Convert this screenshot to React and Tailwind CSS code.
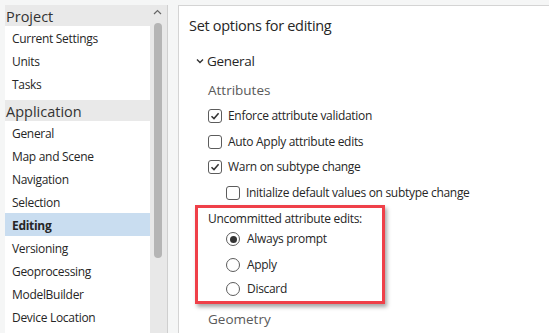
import React from 'react';

const font = { fontFamily: '"Open Sans", "Noto Sans", sans-serif' };

const groups = [
  { title: 'Project', items: ['Current Settings', 'Units', 'Tasks'] },
  {
    title: 'Application',
    items: ['General', 'Map and Scene', 'Navigation', 'Selection', 'Editing', 'Versioning', 'Geoprocessing', 'ModelBuilder', 'Device Location'],
  },
];

const Checkbox = ({ checked }) => (
  <span className="w-[14px] h-[14px] border border-[#5c5c5c] rounded-[3px] bg-white flex items-center justify-center shrink-0">
    {checked && (
      <svg width="10" height="10" viewBox="0 0 10 10">
        <path d="M1.5 5.2 L4 7.6 L8.6 2.2" fill="none" stroke="#333" strokeWidth="1.5" />
      </svg>
    )}
  </span>
);

const Radio = ({ checked }) => (
  <span className="w-[14px] h-[14px] border border-[#5c5c5c] rounded-full bg-white flex items-center justify-center shrink-0">
    {checked && <span className="w-[7px] h-[7px] rounded-full bg-[#333]" />}
  </span>
);

const CheckRow = ({ checked, label, h, indent }) => (
  <div className={`flex items-center gap-[6px] ${h} ${indent ? 'pl-[37px]' : 'pl-[19px]'}`}>
    <Checkbox checked={checked} />
    <span>{label}</span>
  </div>
);

const RadioRow = ({ checked, label, h }) => (
  <div className={`flex items-center gap-[7px] pl-[28px] ${h}`}>
    <Radio checked={checked} />
    <span>{label}</span>
  </div>
);

export default function App() {
  return (
    <div className="w-[549px] h-[333px] bg-[#f5f6f6] flex pt-[5px] pl-[5px] overflow-hidden text-[#262626]" style={font}>
      {/* sidebar */}
      <div className="w-[145px] bg-white flex flex-col">
        {groups.map((g, gi) => (
          <div key={g.title} className={gi === 0 ? 'pb-[5px]' : ''}>
            <div className="h-[21px] bg-[#e9e9e9] flex items-center pl-[1px] pt-[2px] text-[14.5px] text-[#333]">{g.title}</div>
            {g.items.map((it) => (
              <div
                key={it}
                className={`h-[23px] flex items-center pl-[7px] pt-[2px] text-[12px] tracking-[-0.3px] ${it === 'Editing' ? 'bg-[#c9ddf0] font-bold' : ''}`}
              >
                {it}
              </div>
            ))}
          </div>
        ))}
      </div>

      {/* scrollbar */}
      <div className="w-[18px] bg-[#e8e8e8] border-r border-[#cfcfcf] flex flex-col items-center pt-[4px]">
        <svg width="9" height="6" viewBox="0 0 9 6" className="ml-[-2px]">
          <path d="M1 5 L4.5 1.5 L8 5" fill="none" stroke="#666" strokeWidth="1.2" />
        </svg>
        <div className="w-[8px] h-[235px] mt-[8px] bg-[#b5b5b5] rounded-full ml-[-2px]" />
      </div>

      <div className="w-[10px]" />

      {/* main panel */}
      <div className="flex-1 bg-white border-l border-t border-[#d4d4d4] flex flex-col pl-[10px] pt-[1px] text-[12px] tracking-[-0.3px]">
        <div className="h-[40px] flex items-center text-[14.5px]">Set options for editing</div>
        <div className="h-[32px] flex items-center gap-[3px] pl-[7px] text-[13.5px]">
          <svg width="8" height="6" viewBox="0 0 8 6">
            <path d="M1 1.5 L4 4.5 L7 1.5" fill="none" stroke="#333" strokeWidth="1.4" />
          </svg>
          <span>General</span>
        </div>
        <div className="h-[29px] flex items-center pl-[19px] text-[13.5px] tracking-normal text-[#5a5a5a]">Attributes</div>
        <CheckRow checked label="Enforce attribute validation" h="h-[26px]" />
        <CheckRow label="Auto Apply attribute edits" h="h-[27px]" />
        <CheckRow checked label="Warn on subtype change" h="h-[27px]" />
        <CheckRow indent label="Initialize default values on subtype change" h="h-[26px]" />

        <div className="ml-[6px] w-[190px] border-[3px] border-[#ef4049] shadow-[2px_3px_4px_rgba(0,0,0,0.35)]">
          <div className="h-[18px] flex items-center pl-[10px] pt-[4px]">Uncommitted attribute edits:</div>
          <RadioRow checked label="Always prompt" h="h-[26px]" />
          <RadioRow label="Apply" h="h-[25px]" />
          <RadioRow label="Discard" h="h-[24px]" />
        </div>

        <div className="h-[30px] flex items-center pl-[19px] text-[13.5px] tracking-normal text-[#5a5a5a]">Geometry</div>
      </div>
    </div>
  );
}
